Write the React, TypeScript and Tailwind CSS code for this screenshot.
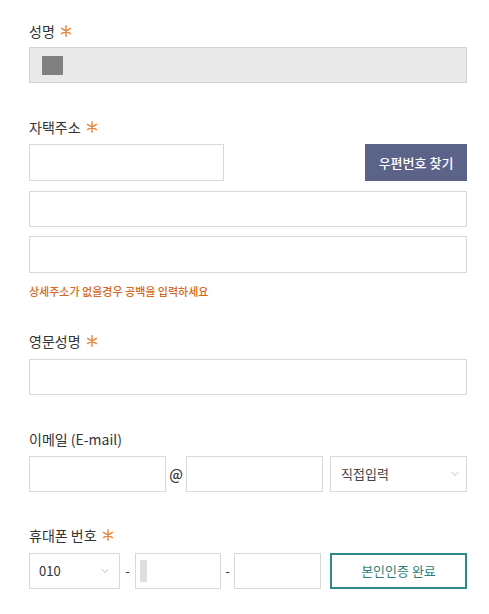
import { ChevronDown } from "lucide-react";

const font = { fontFamily: '"Noto Sans CJK KR", "Noto Sans", sans-serif' };

function Star() {
  return (
    <svg className="ml-[5px] w-[12px] h-[12px]" viewBox="0 0 12 12" stroke="#e8833a" strokeWidth={1.4} strokeLinecap="round">
      <path d="M6 0.8V11.2M1.5 3.4L10.5 8.6M1.5 8.6L10.5 3.4" />
    </svg>
  );
}

function Label({ text, required, className = "" }: { text: string; required?: boolean; className?: string }) {
  return (
    <div className={`h-[20px] leading-[20px] text-[14px] text-[#333] flex items-center ${className}`}>
      <span>{text}</span>
      {required && <Star />}
    </div>
  );
}

function Box({ className = "", children }: { className?: string; children?: React.ReactNode }) {
  return <div className={`border border-[#d9d9d9] bg-white ${className}`}>{children}</div>;
}

export default function App() {
  return (
    <div className="min-h-screen bg-white pl-[29px] pr-[22px] pt-[21px]" style={font}>
      <Label text="성명" required />
      <div className="mt-[6px] h-[36px] border border-[#d4d4d4] bg-[#e9e9e9] flex items-center pl-[12px]">
        <div className="w-[21px] h-[19px] bg-[#808080]" />
      </div>

      <Label text="자택주소" required className="mt-[34px]" />
      <div className="mt-[7px] flex justify-between">
        <Box className="w-[195px] h-[37px]" />
        <button className="w-[102px] h-[37px] bg-[#5b6389] text-white text-[13px] font-medium">
          우편번호 찾기
        </button>
      </div>
      <Box className="mt-[10px] h-[36px]" />
      <Box className="mt-[9px] h-[37px]" />
      <p className="mt-[10px] text-[11px] leading-[16px] font-medium text-[#d2691e]">
        상세주소가 없을경우 공백을 입력하세요
      </p>

      <Label text="영문성명" required className="mt-[32px]" />
      <Box className="mt-[8px] h-[36px]" />

      <Label text="이메일 (E-mail)" className="mt-[34px]" />
      <div className="mt-[7px] flex items-center h-[36px]">
        <Box className="w-[137px] h-full" />
        <span className="w-[20px] text-center text-[14px] text-[#333] font-medium">@</span>
        <Box className="w-[137px] h-full" />
        <Box className="ml-[7px] w-[137px] h-full flex items-center justify-between pl-[10px] pr-[5px]">
          <span className="text-[13px] text-[#444]">직접입력</span>
          <ChevronDown className="w-[12px] h-[12px] text-[#aaa]" strokeWidth={1.5} />
        </Box>
      </div>

      <Label text="휴대폰 번호" required className="mt-[33px]" />
      <div className="mt-[8px] flex items-center h-[36px]">
        <Box className="w-[91px] h-full flex items-center justify-between pl-[9px] pr-[8px]">
          <span className="text-[13px] text-[#333]">010</span>
          <ChevronDown className="w-[12px] h-[12px] text-[#aaa]" strokeWidth={1.5} />
        </Box>
        <span className="w-[15px] text-center text-[13px] text-[#333]">-</span>
        <Box className="w-[86px] h-full flex items-center pl-[4px]">
          <div className="w-[7px] h-[22px] bg-[#dedede]" />
        </Box>
        <span className="w-[13px] text-center text-[13px] text-[#333]">-</span>
        <Box className="w-[87px] h-full" />
        <button className="ml-[9px] w-[137px] h-full border-2 border-[#2e8a86] bg-white text-[13px] text-[#2e7f7b]">
          본인인증 완료
        </button>
      </div>
    </div>
  );
}
